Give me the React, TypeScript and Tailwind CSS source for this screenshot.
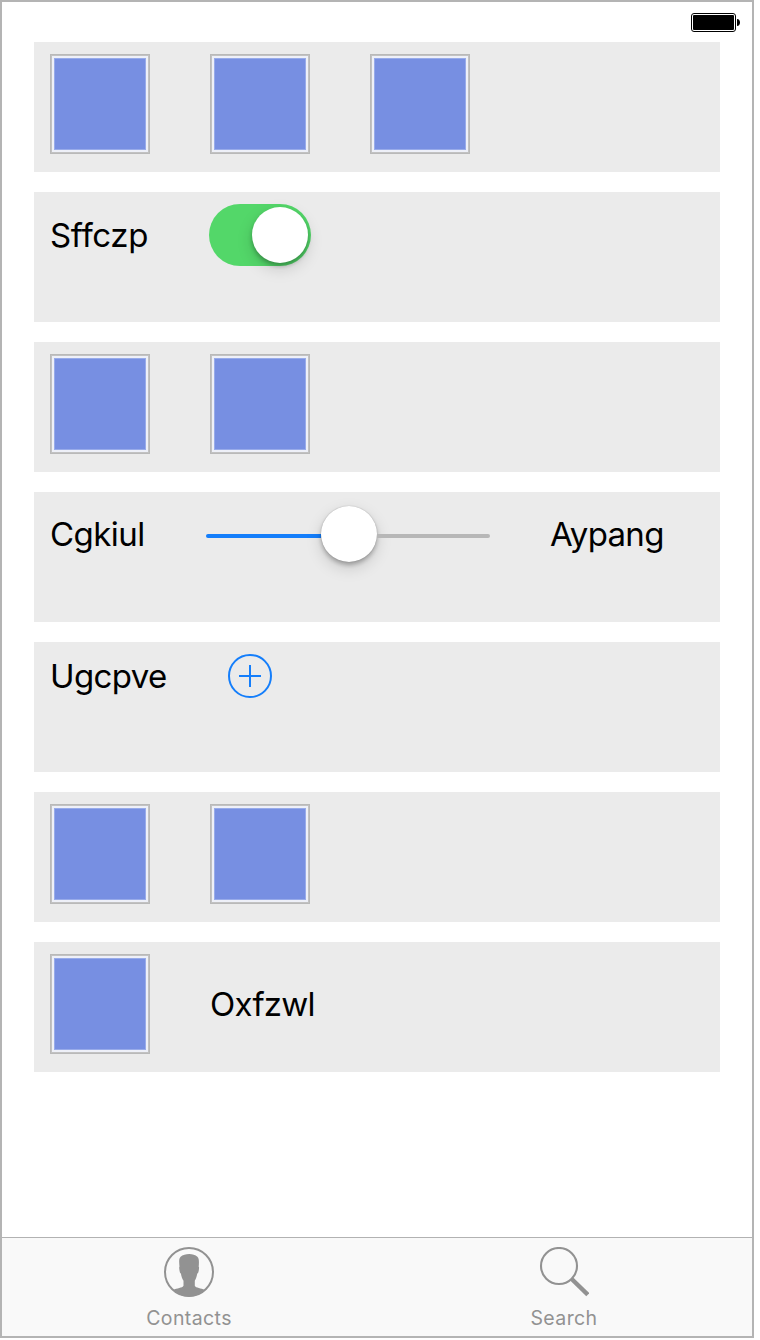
import type { ReactNode } from "react";

function Row({ children }: { children: ReactNode }) {
  return (
    <section className="flex h-[130px] items-start bg-[#ebebeb] px-4 pt-3">
      <div className="flex items-center">{children}</div>
    </section>
  );
}

function Tile() {
  return (
    <div className="mr-[60px] size-[100px] border border-[#b9b9b9] bg-[#eef0f8] p-[3px] shadow-[inset_0_0_0_1px_#c2c2c2]">
      <div className="size-full border border-[#98abea] bg-[#778fe2]" />
    </div>
  );
}

function Label({ children, className }: { children: ReactNode; className: string }) {
  return (
    <span
      className={`block text-[33px] leading-[40px] whitespace-nowrap text-black [font-feature-settings:'calt'_0] ${className}`}
    >
      {children}
    </span>
  );
}

function Switch() {
  return (
    <div className="flex h-[62px] w-[102px] items-center justify-end rounded-full bg-[#53d769] pr-[3px]">
      <div className="size-14 rounded-full bg-white shadow-[0_6px_16px_rgba(0,0,0,0.15),0_3px_4px_rgba(0,0,0,0.25)]" />
    </div>
  );
}

function Slider() {
  return (
    <div className="flex h-[60px] w-[284px] items-center">
      <div className="mt-1 h-1 w-[115px] rounded-l-full bg-[#147efb]" />
      <div className="size-14 shrink-0 rounded-full bg-white shadow-[0_0_1px_rgba(0,0,0,0.3),0_6px_16px_rgba(0,0,0,0.15),0_3px_4px_rgba(0,0,0,0.25)]" />
      <div className="mt-1 h-1 flex-1 rounded-r-full bg-[#b7b7b7]" />
    </div>
  );
}

function AddIcon() {
  return (
    <svg className="block size-11" viewBox="0 0 44 44" fill="none" stroke="#147efb" strokeWidth="2">
      <circle cx="22" cy="22" r="21" />
      <path d="M11 22H33M22 11V33" />
    </svg>
  );
}

function Battery() {
  return (
    <svg className="block h-5 w-[50px]" viewBox="0 0 50 20">
      <rect x="0.5" y="0.5" width="44" height="18" rx="2.5" fill="none" stroke="#000" />
      <rect x="2" y="2" width="41" height="15" rx="1" fill="#000" />
      <path d="M46 6C48 6 49 7.6 49 9.5S48 13 46 13Z" fill="#000" />
    </svg>
  );
}

function ContactsIcon() {
  return (
    <svg className="block size-[50px]" viewBox="0 0 50 50">
      <circle cx="25" cy="25" r="24" fill="none" stroke="#929292" strokeWidth="2" />
      <path
        d="M9.5 43C12.5 41 18.6 41.2 19.5 38.8V33.8C18.2 31.9 17.3 29.5 16.9 26.6C15.9 26.3 15.5 24.2 15.2 21.3C15.1 20.4 15.3 20 15.5 19.8C15 14.6 14.8 11.6 16.6 9.8C18.6 7.8 22 7 25.2 7C28.4 7 31.4 7.8 33.4 9.8C35.2 11.6 35.1 14.6 34.7 19.8C35 20 35.2 20.5 35 21.5C34.8 24.2 34.3 26.3 33.3 26.6C32.8 29.5 31.9 32 30.8 33.8V38.8C31.7 41.2 37.5 41 40.5 43C36 47.8 31 49.5 25 49.5S14 47.8 9.5 43Z"
        fill="#929292"
      />
    </svg>
  );
}

function SearchIcon() {
  return (
    <svg className="block size-[50px]" viewBox="0 0 50 50" fill="none" stroke="#929292">
      <circle cx="20" cy="19" r="18" strokeWidth="2.1" />
      <path d="M32.7 32L48.8 47.7" strokeWidth="4.4" />
    </svg>
  );
}

function Tab({ icon, children }: { icon: ReactNode; children: ReactNode }) {
  return (
    <div className="flex flex-col items-center pt-[9px] text-[#929292]">
      {icon}
      <span className="mt-[9px] text-[19.5px] leading-[25px] tracking-[0.4px]">{children}</span>
    </div>
  );
}

export default function App() {
  return (
    <div className="h-[1340px] w-[760px] bg-white font-['Inter',sans-serif]">
      <div className="flex h-[1338px] w-[754px] flex-col border-2 border-[#b4b4b4]">
        <header className="flex h-10 shrink-0 justify-end pt-[11px] pr-[11px]">
          <Battery />
        </header>
        <main className="flex flex-1 flex-col gap-5 px-8">
          <Row>
            <Tile />
            <Tile />
            <Tile />
          </Row>
          <Row>
            <Label className="w-[159px] tracking-[-0.35px]">Sffczp</Label>
            <Switch />
          </Row>
          <Row>
            <Tile />
            <Tile />
          </Row>
          <Row>
            <Label className="w-[156px] tracking-[-0.55px]">Cgkiul</Label>
            <Slider />
            <Label className="ml-[60px] tracking-[-0.7px]">Aypang</Label>
          </Row>
          <Row>
            <Label className="w-[178px] tracking-[-0.6px]">Ugcpve</Label>
            <AddIcon />
          </Row>
          <Row>
            <Tile />
            <Tile />
          </Row>
          <Row>
            <Tile />
            <Label className="tracking-[-0.75px]">Oxfzwl</Label>
          </Row>
        </main>
        <nav className="grid h-[99px] shrink-0 grid-cols-[374px_376px] border-t border-[#b2b2b2] bg-[#f9f9f9]">
          <Tab icon={<ContactsIcon />}>Contacts</Tab>
          <Tab icon={<SearchIcon />}>Search</Tab>
        </nav>
      </div>
    </div>
  );
}
